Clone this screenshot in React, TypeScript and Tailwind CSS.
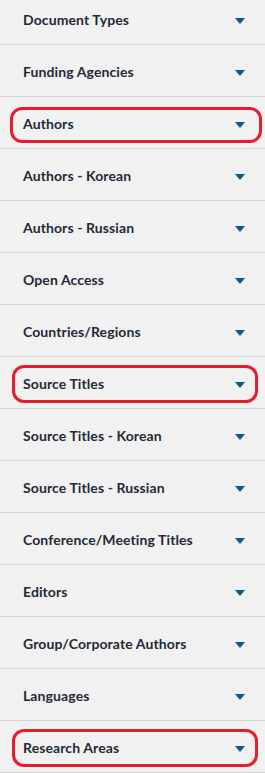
import React from "react";

const items: { label: string; ring?: "a" | "b" }[] = [
  { label: "Document Types" },
  { label: "Funding Agencies" },
  { label: "Authors", ring: "a" },
  { label: "Authors - Korean" },
  { label: "Authors - Russian" },
  { label: "Open Access" },
  { label: "Countries/Regions" },
  { label: "Source Titles", ring: "b" },
  { label: "Source Titles - Korean" },
  { label: "Source Titles - Russian" },
  { label: "Conference/Meeting Titles" },
  { label: "Editors" },
  { label: "Group/Corporate Authors" },
  { label: "Languages" },
  { label: "Research Areas", ring: "b" },
];

function Caret() {
  return (
    <svg width="10" height="6" viewBox="0 0 10 6" className="block mt-[4px]">
      <path d="M0 0 H10 L5 6 Z" fill="#0a5a86" />
    </svg>
  );
}

export default function App() {
  return (
    <div className="w-[265px] h-[773px] overflow-hidden bg-[#f1f1f1]" style={{ fontFamily: "Lato, 'Open Sans', sans-serif" }}>
      <div className="-mt-[7px]">
        {items.map((it, i) => (
          <div
            key={i}
            className="relative h-[52px] border-b border-[#d3d3d3] flex items-center pl-[23px] pr-[20px] pt-[1px]"
          >
            <span className="flex-1 text-[14px] font-bold text-[#232a36] tracking-[0.1px]">{it.label}</span>
            <Caret />
            {it.ring === "a" && (
              <div className="absolute left-[10px] right-[3px] top-[10px] h-[36px] rounded-[12px] border-[3px] border-[#e41e2b]" />
            )}
            {it.ring === "b" && (
              <div className="absolute left-[12px] right-[7px] top-[8px] h-[38px] rounded-[12px] border-[3px] border-[#e41e2b]" />
            )}
          </div>
        ))}
      </div>
    </div>
  );
}
